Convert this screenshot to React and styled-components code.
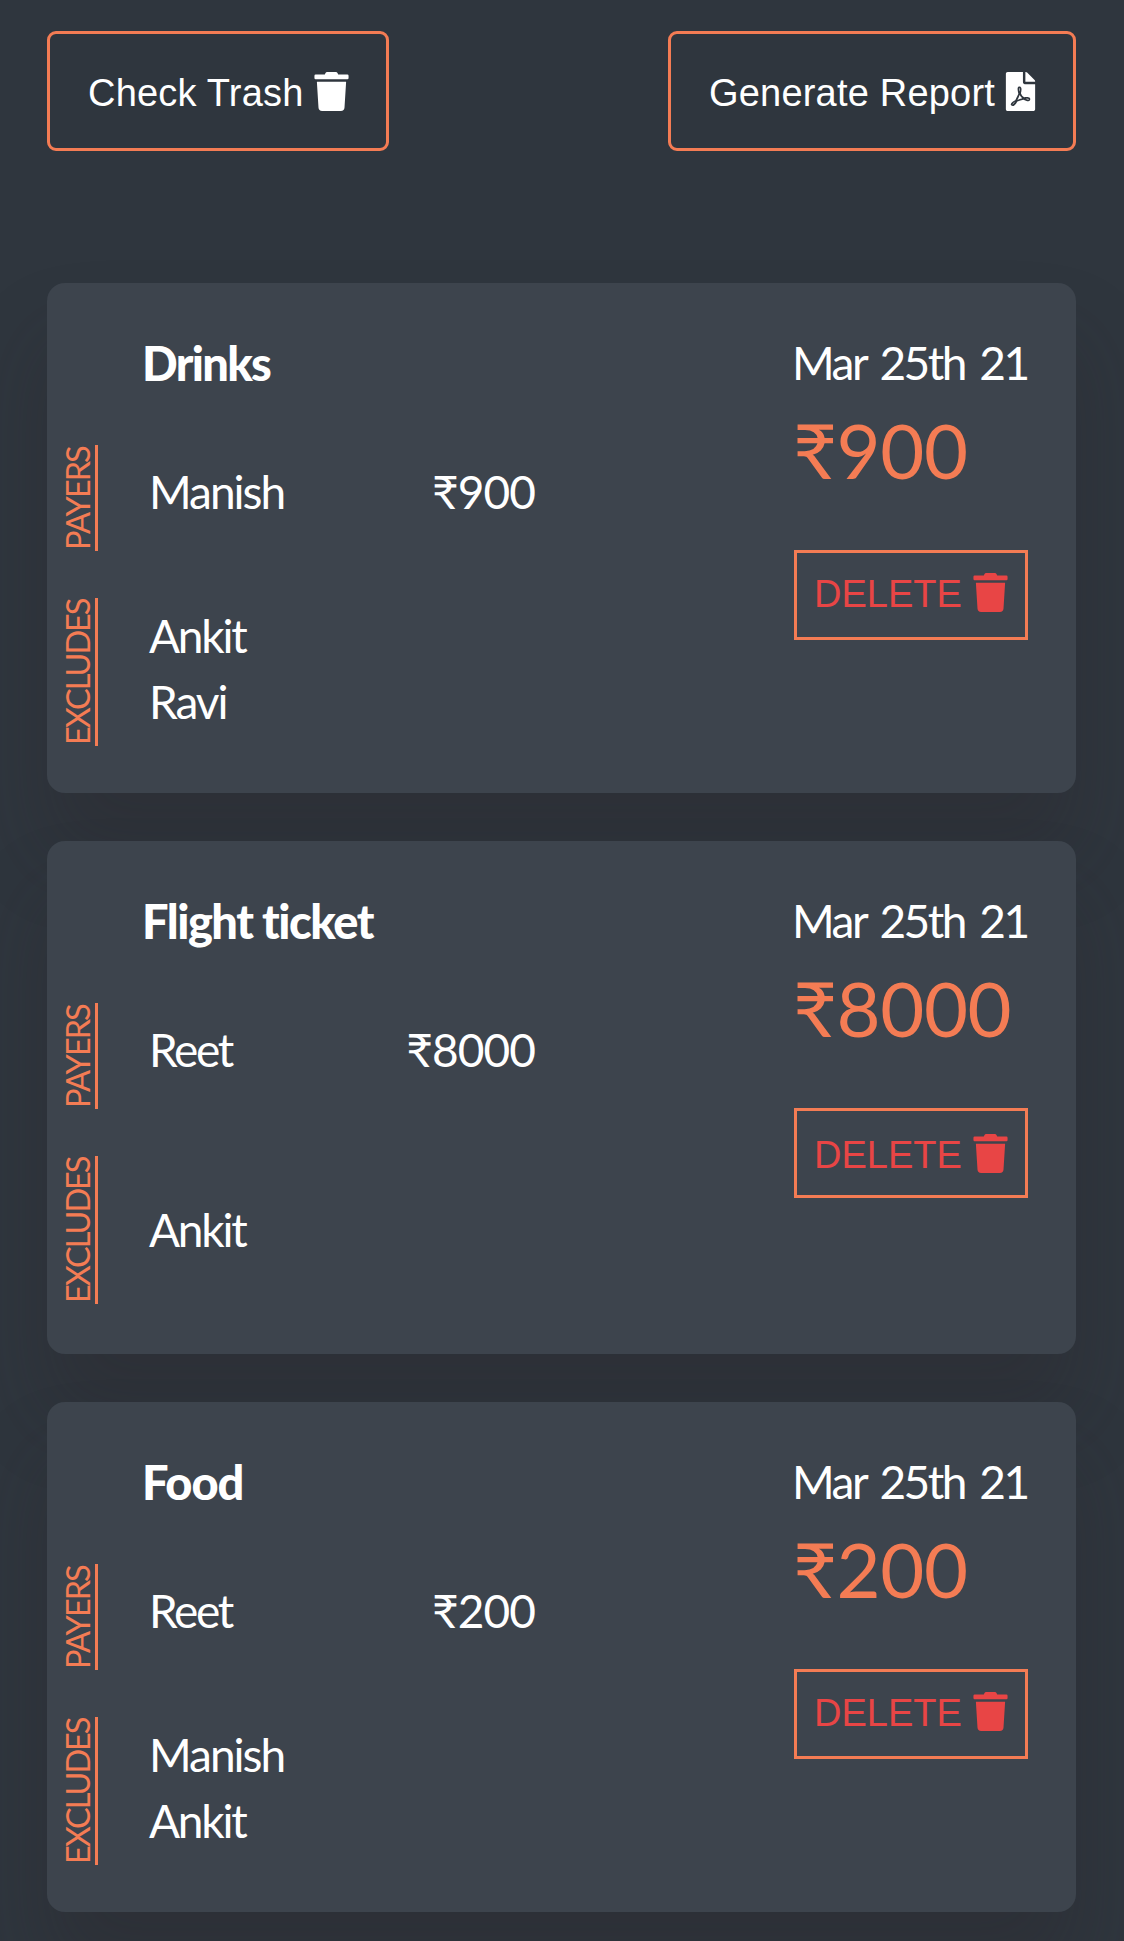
import React from "react";
import styled, { createGlobalStyle } from "styled-components";
import { FaTrash, FaFilePdf } from "react-icons/fa";

const GlobalStyle = createGlobalStyle`
  * { box-sizing: border-box; }
  body {
    margin: 0;
    background: #2f363e;
    color: #fff;
    font-family: Lato, "Noto Sans", sans-serif;
  }
`;

const Page = styled.main`
  min-height: 1941px;
  padding: 31px 48px 29px 47px;
  overflow: hidden;
`;

const Toolbar = styled.div`
  display: flex;
  justify-content: space-between;
  margin-bottom: 132px;
`;

const ToolButton = styled.button`
  display: flex;
  align-items: flex-start;
  width: ${(p) => p.$width}px;
  height: 120px;
  padding: 38px 0 0 38px;
  border: 3px solid #f47c54;
  border-radius: 9px;
  background: transparent;
  color: #fff;
  font: 38px/42px "Liberation Sans", Arial, sans-serif;
  letter-spacing: 0.2px;
  white-space: nowrap;
  svg { width: auto; height: 39px; margin-left: ${(p) => p.$gap}px; }
`;

const List = styled.div`
  display: flex;
  flex-direction: column;
  gap: 48px;
`;

const Card = styled.article`
  display: flex;
  justify-content: space-between;
  height: ${(p) => p.$height}px;
  padding: 51px 48px 0 0;
  border-radius: 18px;
  background: #3d444d;
  box-shadow: 0 60px 80px rgba(38, 30, 36, 0.25);
`;

const Details = styled.div`
  width: 490px;
`;

const Title = styled.h2`
  margin: -1px 0 52px 95px;
  font-size: 47px;
  font-weight: 900;
  line-height: 60px;
  letter-spacing: ${(p) => p.$spacing}px;
  white-space: nowrap;
`;

const Section = styled.section`
  display: grid;
  grid-template-columns: 51px 1fr;
  column-gap: 51px;
  height: ${(p) => p.$height}px;
`;

const Label = styled.h3`
  display: flex;
  width: 35px;
  margin: 0 0 0 16px;
  height: ${(p) => p.$length}px;
  padding-top: 1px;
  border-left: 3px solid #f47c54;
  color: #f47c54;
  font-size: 32.5px;
  font-weight: 400;
  line-height: 30px;
  letter-spacing: ${(p) => p.$spacing}px;
  writing-mode: vertical-rl;
  transform: rotate(180deg);
  white-space: nowrap;
`;

const People = styled.div`
  display: flex;
  flex-direction: column;
  justify-content: center;
  height: ${(p) => p.$height}px;
`;

const Person = styled.div`
  display: flex;
  justify-content: space-between;
  padding-top: 2px;
  font-size: 46px;
  line-height: 64px;
`;

const Word = styled.span`
  letter-spacing: ${(p) => p.$spacing}px;
  white-space: nowrap;
`;

const Share = styled(Word)`
  margin-right: 2px;
`;

const Summary = styled.div`
  width: 234px;
`;

const DateText = styled.div`
  margin: -1px 0 0 -2px;
  font-size: 46px;
  line-height: 60px;
  letter-spacing: -2.5px;
  word-spacing: 5px;
  white-space: nowrap;
`;

const Total = styled.div`
  margin: 9px 0 52px -1px;
  color: #f47c54;
  font-size: 76px;
  line-height: 96px;
  letter-spacing: -0.4px;
  white-space: nowrap;
`;

const DeleteButton = styled.button`
  display: flex;
  align-items: flex-start;
  width: 234px;
  height: 90px;
  padding: ${(p) => p.$top}px 0 0 17px;
  border: 3px solid #f47c54;
  border-radius: 0;
  background: transparent;
  color: #e84545;
  font: 38px/42px "Liberation Sans", Arial, sans-serif;
  white-space: nowrap;
  svg { width: auto; height: 39px; margin-left: 9px; }
`;

const nameSpacing = { Manish: -2, Reet: -2.3, Ankit: -2.2, Ravi: -2 };

const expenses = [
  { title: "Drinks", titleSpacing: -1.7, payer: "Manish", amount: "₹900", excludes: ["Ankit", "Ravi"] },
  { title: "Flight ticket", titleSpacing: -1.5, payer: "Reet", amount: "₹8000", excludes: ["Ankit"] },
  { title: "Food", titleSpacing: -1.1, payer: "Reet", amount: "₹200", excludes: ["Manish", "Ankit"] },
];

function Expense({ item }) {
  const single = item.excludes.length === 1;
  return (
    <Card $height={single ? 513 : 510}>
      <Details>
        <Title $spacing={item.titleSpacing}>{item.title}</Title>
        <Section $height={153}>
          <Label $length={106} $spacing={-2}>PAYERS</Label>
          <People $height={92}>
            <Person>
              <Word $spacing={nameSpacing[item.payer]}>{item.payer}</Word>
              <Share $spacing={-0.9}>{item.amount}</Share>
            </Person>
          </People>
        </Section>
        <Section $height={148}>
          <Label $length={148} $spacing={-2}>EXCLUDES</Label>
          <People $height={single ? 146 : 140}>
            {item.excludes.map((name) => (
              <Person key={name}>
                <Word $spacing={nameSpacing[name]}>{name}</Word>
              </Person>
            ))}
          </People>
        </Section>
      </Details>
      <Summary>
        <DateText>Mar 25th 21</DateText>
        <Total>{item.amount}</Total>
        <DeleteButton $top={single ? 23 : 20}>
          DELETE
          <FaTrash />
        </DeleteButton>
      </Summary>
    </Card>
  );
}

export default function App() {
  return (
    <Page>
      <GlobalStyle />
      <Toolbar>
        <ToolButton $width={342} $gap={8}>
          Check Trash
          <FaTrash />
        </ToolButton>
        <ToolButton $width={408} $gap={6}>
          Generate Report
          <FaFilePdf />
        </ToolButton>
      </Toolbar>
      <List>
        {expenses.map((item) => (
          <Expense key={item.title} item={item} />
        ))}
      </List>
    </Page>
  );
}
